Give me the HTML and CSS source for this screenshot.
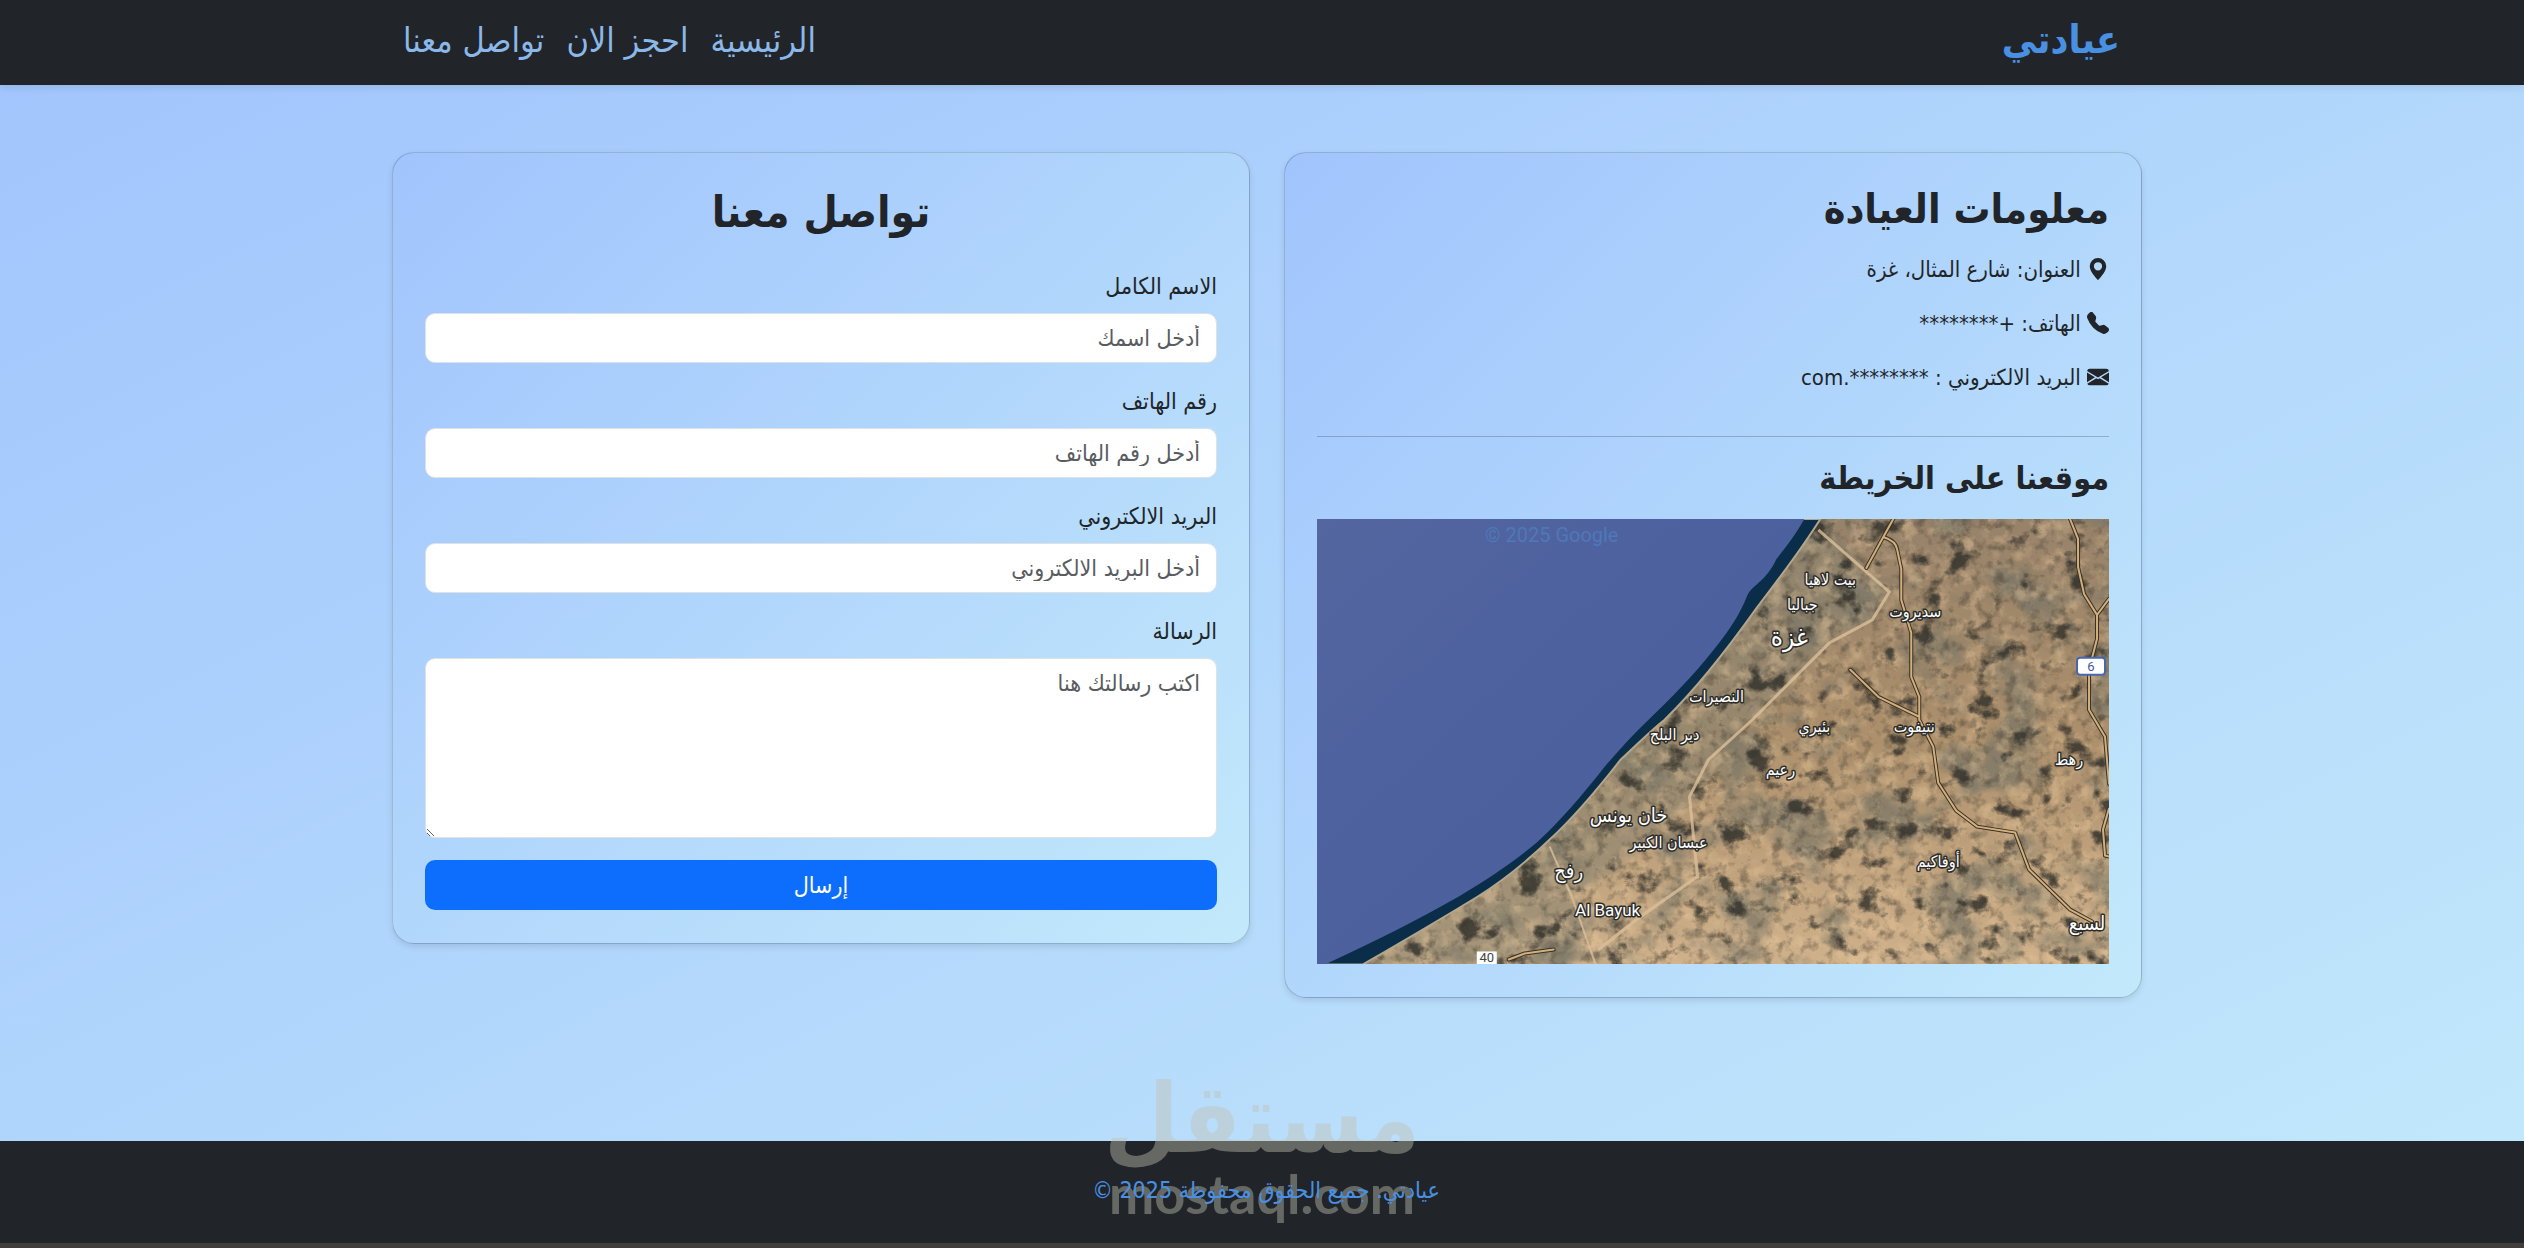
FILE: index.html
```html
<!DOCTYPE html>
<html lang="ar" dir="rtl">
<head>
<meta charset="utf-8">
<meta name="viewport" content="width=device-width, initial-scale=1">
<title>عيادتي - تواصل معنا</title>
<link rel="stylesheet" href="styles.css">
</head>
<body>
<header class="navbar">
  <div class="container navbar-inner">
    <a class="brand" href="#">عيادتي</a>
    <nav class="nav">
      <a class="nav-link" href="#">الرئيسية</a>
      <a class="nav-link" href="#">احجز الان</a>
      <a class="nav-link" href="#">تواصل معنا</a>
    </nav>
  </div>
</header>

<main class="container main">
  <section class="card">
    <h2 class="info-title">معلومات العيادة</h2>
    <p class="info-line">
      <svg class="icon" viewBox="0 0 16 16" aria-hidden="true"><path d="M8 16s6-5.686 6-10A6 6 0 0 0 2 6c0 4.314 6 10 6 10m0-7a3 3 0 1 1 0-6 3 3 0 0 1 0 6"/></svg>
      العنوان: شارع المثال، غزة
    </p>
    <p class="info-line">
      <svg class="icon" viewBox="0 0 16 16" aria-hidden="true"><path fill-rule="evenodd" d="M1.885.511a1.745 1.745 0 0 1 2.61.163L6.29 2.98c.329.423.445.974.315 1.494l-.547 2.19a.68.68 0 0 0 .178.643l2.457 2.457a.68.68 0 0 0 .644.178l2.189-.547a1.75 1.75 0 0 1 1.494.315l2.306 1.794c.829.645.905 1.87.163 2.611l-1.034 1.034c-.74.74-1.846 1.065-2.877.702a18.6 18.6 0 0 1-7.01-4.42 18.6 18.6 0 0 1-4.42-7.009c-.362-1.03-.037-2.137.703-2.877z"/></svg>
      الهاتف: +********
    </p>
    <p class="info-line">
      <svg class="icon" viewBox="0 0 16 16" aria-hidden="true"><path d="M.05 3.555A2 2 0 0 1 2 2h12a2 2 0 0 1 1.95 1.555L8 8.414zM0 4.697v7.104l5.803-3.558zM6.761 8.83l-6.57 4.027A2 2 0 0 0 2 14h12a2 2 0 0 0 1.808-1.144l-6.57-4.027L8 9.586zm3.436-.586L16 11.801V4.697z"/></svg>
      البريد الالكتروني : ********.com
    </p>
    <hr class="divider">
    <h3 class="map-title">موقعنا على الخريطة</h3>
    <svg class="map" viewBox="0 0 793 446" preserveAspectRatio="xMidYMid slice" role="img" aria-label="خريطة غزة">
      <defs>
        <linearGradient id="land" x1="0" y1="0" x2="0" y2="1">
          <stop offset="0" stop-color="#97826a"/>
          <stop offset=".5" stop-color="#ad906c"/>
          <stop offset="1" stop-color="#cfb18b"/>
        </linearGradient>
        <linearGradient id="sea" x1="0" y1="0" x2="1" y2="1">
          <stop offset="0" stop-color="#53669f"/>
          <stop offset=".4" stop-color="#4d619f"/>
          <stop offset="1" stop-color="#4a5f9c"/>
        </linearGradient>
        <filter id="patches" x="0" y="0" width="1" height="1" color-interpolation-filters="sRGB">
          <feTurbulence type="fractalNoise" baseFrequency=".035 .04" numOctaves="6" seed="8"/>
          <feColorMatrix values="0 0 0 0 .18  0 0 0 0 .18  0 0 0 0 .16  6 0 0 0 -3.6"/>
        </filter>
        <filter id="fields" x="0" y="0" width="1" height="1" color-interpolation-filters="sRGB">
          <feTurbulence type="fractalNoise" baseFrequency=".015 .018" numOctaves="6" seed="21"/>
          <feColorMatrix values="0 0 0 0 .47  0 0 0 0 .46  0 0 0 0 .4  0 5 0 0 -2.5"/>
        </filter>
        <filter id="grain" x="0" y="0" width="1" height="1" color-interpolation-filters="sRGB">
          <feTurbulence type="fractalNoise" baseFrequency=".06" numOctaves="5" seed="4"/>
          <feColorMatrix values="0 0 0 0 .93  0 0 0 0 .8  0 0 0 0 .62  0 0 3 0 -1.4"/>
        </filter>
        <filter id="shade" x="0" y="0" width="1" height="1" color-interpolation-filters="sRGB">
          <feTurbulence type="fractalNoise" baseFrequency=".09" numOctaves="4" seed="33"/>
          <feColorMatrix values="0 0 0 0 .3  0 0 0 0 .27  0 0 0 0 .22  0 3 0 0 -1.5"/>
        </filter>
        <filter id="soft"><feGaussianBlur stdDeviation="3"/></filter>
      </defs>
      <rect width="793" height="446" fill="url(#land)"/>
      <path d="M504 0 441 88 348 201 304 241 233 321 161 378 46 446H255L279 400 256 378 300 350 381 278 436 201 513 124 556 101 573 73Z" fill="#8b8470" opacity=".6" filter="url(#soft)"/>
      <rect width="793" height="446" filter="url(#fields)" opacity=".7"/>
      <rect width="793" height="446" filter="url(#grain)" opacity=".4"/>
      <rect width="793" height="446" filter="url(#shade)" opacity=".5"/>
      <rect width="793" height="446" filter="url(#patches)" opacity=".8"/>
      <path d="M0 0H504C484 32 464 58 441 88 414 126 384 166 348 201 334 212 318 228 304 241 283 268 258 298 233 321 211 342 188 361 161 378 122 402 84 424 46 446H0Z" fill="#0a2d49" stroke="#b3a68c" stroke-width="2"/>
      <path d="M0 0H488C480 14 470 28 460 40 450 62 436 66 431 76 424 94 414 110 398 130 376 158 352 182 332 201 316 216 302 232 288 248 266 276 244 302 220 324 196 344 172 360 142 378 100 402 56 424 8 446H0Z" fill="url(#sea)"/>
      <g fill="none" stroke="#dcc09a" stroke-width="3" stroke-linejoin="round" opacity=".8">
        <path d="M502 11 573 73 556 101 513 124 436 201 392 241 373 278 381 358 320 401 282 431"/>
        <path d="M233 328 255 378 279 446" stroke-width="2"/>
      </g>
      <g fill="none" stroke-linejoin="round" stroke-linecap="round">
        <path stroke="#3b3126" stroke-width="4" d="M577 0 567 18 550 49M567 18Q580 22 581 31L585 50V81L595 114V158L603 178V201L617 228 622 264 640 292 661 308 699 314 713 351 754 391 776 403M534 151 562 178 603 198M754 0 762 20V48L768 75 781 96V120L773 151V191L789 218 793 265M793 80 781 96M793 290 787 311 789 337 793 338M192 441 208 435 237 431"/>
        <path stroke="#d2b07c" stroke-width="2" d="M577 0 567 18 550 49M567 18Q580 22 581 31L585 50V81L595 114V158L603 178V201L617 228 622 264 640 292 661 308 699 314 713 351 754 391 776 403M534 151 562 178 603 198M754 0 762 20V48L768 75 781 96V120L773 151V191L789 218 793 265M793 80 781 96M793 290 787 311 789 337 793 338M192 441 208 435 237 431"/>
      </g>
      <g class="place">
        <text x="514" y="66">بيت لاهيا</text>
        <text x="486" y="91">جباليا</text>
        <text class="place-city" x="473" y="127">غزة</text>
        <text x="599" y="98">سديروت</text>
        <text x="400" y="183">النصيرات</text>
        <text x="358" y="221">دير البلح</text>
        <text x="498" y="213">بئيري</text>
        <text x="598" y="213">نتيفوت</text>
        <text x="464" y="256">رعيم</text>
        <text x="753" y="246">رهط</text>
        <text class="place-town" x="312" y="303">خان يونس</text>
        <text x="352" y="329">عبسان الكبير</text>
        <text class="place-town" x="252" y="359">رفح</text>
        <text x="622" y="348">أوفاكيم</text>
        <text class="place-latin" x="291" y="398">Al Bayuk</text>
        <text class="place-town" x="771" y="412">لسبع</text>
      </g>
      <rect x="761" y="139" width="28" height="17" rx="3" fill="#fff" stroke="#4866ad" stroke-width="2"/>
      <text class="sign" x="775" y="152">6</text>
      <rect x="160" y="433" width="20" height="13" fill="#fff"/>
      <text class="sign sign-dark" x="170" y="444">40</text>
      <text class="credit" x="235" y="23">© 2025 Google</text>
    </svg>
  </section>

  <section class="card">
    <h1 class="form-title">تواصل معنا</h1>
    <form class="form">
      <div class="field">
        <label for="name">الاسم الكامل</label>
        <input class="control" id="name" type="text" placeholder="أدخل اسمك">
      </div>
      <div class="field">
        <label for="phone">رقم الهاتف</label>
        <input class="control" id="phone" type="text" placeholder="أدخل رقم الهاتف">
      </div>
      <div class="field">
        <label for="email">البريد الالكتروني</label>
        <input class="control" id="email" type="text" placeholder="أدخل البريد الالكتروني">
      </div>
      <div class="field">
        <label for="message">الرسالة</label>
        <textarea class="control control-area" id="message" placeholder="اكتب رسالتك هنا"></textarea>
      </div>
      <button class="submit" type="submit">إرسال</button>
    </form>
  </section>
</main>

<footer class="footer">
  <div class="watermark" dir="ltr">
    <span class="watermark-ar">مستقل</span>
    <span class="watermark-en">mostaql.com</span>
  </div>
  <p class="copyright">عيادتي. جميع الحقوق محفوظة 2025 ©</p>
</footer>
</body>
</html>
```
FILE: styles.css
```css
* { box-sizing: border-box; }

body {
  margin: 0;
  min-height: 100vh;
  display: flex;
  flex-direction: column;
  font-family: "DejaVu Sans Condensed", "DejaVu Sans", sans-serif;
  font-size: 23px;
  line-height: 32px;
  color: #212529;
  background: linear-gradient(to bottom right, #a1c4fd, #c2e9fb);
}

h1, h2, h3, p { margin: 0; }

.container {
  width: 100%;
  max-width: 1790px;
  margin: 0 auto;
  padding: 0 15px 0 25px;
}

.navbar {
  background: #212529;
  box-shadow: 0 2px 8px rgba(0, 0, 0, .1);
}

.navbar-inner {
  display: flex;
  align-items: center;
  justify-content: space-between;
  min-height: 85px;
  padding-bottom: 6px;
}

.brand {
  margin-right: 22px;
  color: #4a90e2;
  font-size: 39px;
  line-height: 48px;
  font-weight: 700;
  text-decoration: none;
}

.nav {
  display: flex;
  gap: 22px;
  margin-left: 11px;
}

.nav-link {
  color: #8bb8e8;
  font-size: 34px;
  line-height: 48px;
  text-decoration: none;
}

.main {
  display: grid;
  grid-template-columns: 1fr 1fr;
  align-items: start;
  gap: 34px;
  margin-top: 67px;
  margin-bottom: 140px;
}

.card {
  padding: 33px 32px;
  border: 1px solid rgba(0, 0, 0, .18);
  border-radius: 22px;
  background: linear-gradient(to bottom right, #a1c4fd, #c2e9fb);
  box-shadow: 0 3px 6px rgba(0, 0, 0, .1);
}

.info-title {
  margin-bottom: 22px;
  font-size: 41px;
  line-height: 46px;
}

.info-line {
  margin-bottom: 22px;
  font-size: 22px;
}

.icon {
  width: 22px;
  height: 22px;
  vertical-align: -3px;
  fill: currentColor;
}

.divider {
  margin: 42px 0 22px;
  border: 0;
  border-top: 1px solid rgba(33, 37, 41, .25);
}

.map-title {
  margin-bottom: 21px;
  font-size: 32px;
  line-height: 39px;
}

.map {
  display: block;
  width: 100%;
  aspect-ratio: 793 / 446;
}

.place {
  fill: #fff;
  stroke: #2b2b28;
  stroke-width: 3px;
  stroke-linejoin: round;
  paint-order: stroke;
  font-size: 16px;
  text-anchor: middle;
}

.place-city { font-size: 26px; }
.place-town { font-size: 20px; }

.place-latin {
  font-family: Roboto, sans-serif;
  font-size: 17px;
}

.sign {
  fill: #35599f;
  font-family: Roboto, sans-serif;
  font-size: 13px;
  text-anchor: middle;
}

.sign-dark { fill: #444; }

.credit {
  direction: ltr;
  fill: #4f78b8;
  font-family: Roboto, sans-serif;
  font-size: 20px;
  text-anchor: middle;
}

.form-title {
  margin-bottom: 32px;
  font-size: 44px;
  line-height: 52px;
  text-align: center;
}

.form {
  display: flex;
  flex-direction: column;
  gap: 22px;
}

.field {
  display: flex;
  flex-direction: column;
  gap: 11px;
}

.control {
  width: 100%;
  height: 50px;
  margin: 0;
  padding: 8px 16px;
  border: 1px solid #dee2e6;
  border-radius: 10px;
  background: #fff;
  color: #212529;
  font: inherit;
}

.control::placeholder {
  color: #595c5f;
  opacity: 1;
}

.control-area {
  height: 180px;
  resize: vertical;
}

.submit {
  height: 50px;
  padding: 8px 16px;
  border: 0;
  border-radius: 10px;
  background: #0d6efd;
  color: #fff;
  font: inherit;
}

.footer {
  position: relative;
  margin-top: auto;
  padding: 33px 16px 37px 24px;
  border-bottom: 5px solid #403e3b;
  background: #212529;
  text-align: center;
}

.copyright {
  position: relative;
  color: #4a90e2;
}

.watermark {
  position: absolute;
  top: -70px;
  left: 50%;
  display: flex;
  flex-direction: column;
  align-items: center;
  transform: translateX(-50%);
  color: rgb(194, 193, 177);
  opacity: .43;
  font-weight: 700;
}

.watermark-ar {
  font-size: 96px;
  line-height: 96px;
}

.watermark-en {
  font-family: Lato, sans-serif;
  font-size: 54px;
  line-height: 54px;
}
```
